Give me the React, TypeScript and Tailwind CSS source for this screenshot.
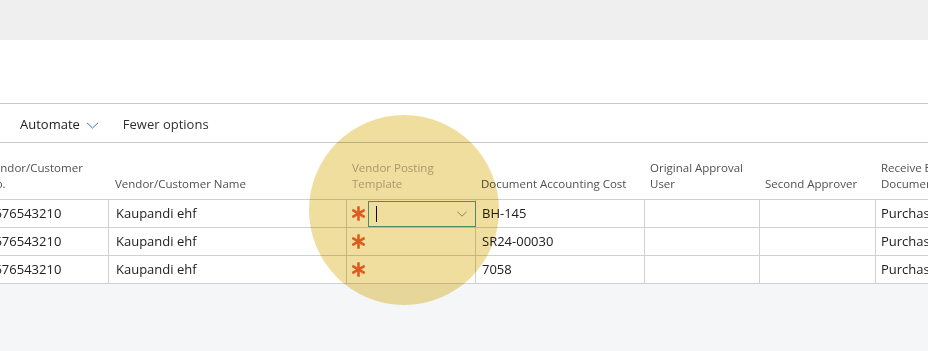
import React from "react";

const font = { fontFamily: '"Segoe UI", "Open Sans", "Noto Sans", sans-serif' };

function Chevron({ className }: { className?: string }) {
  return (
    <svg viewBox="0 0 12 7" className={className} fill="none" stroke="currentColor" strokeWidth="1">
      <path d="M0.5 0.8 L6 6 L11.5 0.8" />
    </svg>
  );
}

function Asterisk() {
  return (
    <svg viewBox="0 0 13 15" className="h-[15px] w-[13px] text-[#ea6a33]" stroke="currentColor" strokeWidth="2.6">
      <path d="M6.5 0.3 V14.7" />
      <path d="M0.3 3.9 L12.7 11.1" />
      <path d="M0.3 11.1 L12.7 3.9" />
    </svg>
  );
}

const rows = [
  { no: "5676543210", name: "Kaupandi ehf", cost: "BH-145", doc: "Purchase Invoice", focus: true },
  { no: "5676543210", name: "Kaupandi ehf", cost: "SR24-00030", doc: "Purchase Invoice", focus: false },
  { no: "5676543210", name: "Kaupandi ehf", cost: "7058", doc: "Purchase Invoice", focus: false },
];

const cols = "grid grid-cols-[129px_238px_129px_169px_115px_116px_160px]";

export default function App() {
  return (
    <div className="relative h-[351px] w-[928px] overflow-hidden bg-[#f5f6f8]" style={font}>
      <div className="h-[40px] bg-[#efefef]" />
      <div className="h-[63px] bg-white" />

      <div className="flex h-[40px] items-center border-y border-[#c8c8c8] bg-white pl-[20px] pt-[3px] text-[13px] text-[#212121]">
        <span>Automate</span>
        <Chevron className="ml-[6px] mt-[1px] h-[7px] w-[13px] text-[#3f78c0]" />
        <span className="ml-[24px] text-[#323130]">Fewer options</span>
      </div>

      <div className="bg-white">
        <div className={`${cols} ml-[-20px] h-[57px] border-b border-[#d1d1d1] text-[11.5px] leading-[16px] text-[#505050]`}>
          <div className="flex items-end px-[7px] pb-[7px]">Vendor/Customer<br />No.</div>
          <div className="flex items-end px-[6px] pb-[7px]">Vendor/Customer Name</div>
          <div className="flex items-end px-[5px] pb-[7px] text-[#b3b0ad]">Vendor Posting<br />Template</div>
          <div className="flex items-end px-[5px] pb-[7px]">Document Accounting Cost</div>
          <div className="flex items-end px-[5px] pb-[7px]">Original Approval<br />User</div>
          <div className="flex items-end px-[5px] pb-[7px]">Second Approver</div>
          <div className="flex items-end whitespace-nowrap px-[5px] pb-[7px]">Receive E-Document<br />Document Type</div>
        </div>

        {rows.map((r, i) => (
          <div key={i} className={`${cols} ml-[-20px] h-[28px] border-b border-[#d1d1d1] text-[13px] text-[#212121]`}>
            <div className="flex items-center border-r border-[#d1d1d1] pl-[7px]">{r.no}</div>
            <div className="flex items-center border-r border-[#d1d1d1] pl-[7px]">{r.name}</div>
            <div className="flex items-center border-r border-[#d1d1d1] pl-[5px]">
              <Asterisk />
              {r.focus && (
                <div className="ml-[3px] mr-[-1px] flex h-[26px] flex-1 items-center justify-between border border-[#52a39a] pl-[7px] pr-[7px]">
                  <span className="h-[16px] w-px bg-[#111]" />
                  <Chevron className="h-[6px] w-[12px] text-[#8a8886]" />
                </div>
              )}
            </div>
            <div className="flex items-center border-r border-[#d1d1d1] pl-[6px]">{r.cost}</div>
            <div className="border-r border-[#d1d1d1]" />
            <div className="border-r border-[#d1d1d1]" />
            <div className="flex items-center whitespace-nowrap pl-[5px]">{r.doc}</div>
          </div>
        ))}
      </div>

      <div className="pointer-events-none absolute left-[309px] top-[115px] h-[190px] w-[190px] rounded-full bg-[#f0de9e] mix-blend-multiply" />
    </div>
  );
}
